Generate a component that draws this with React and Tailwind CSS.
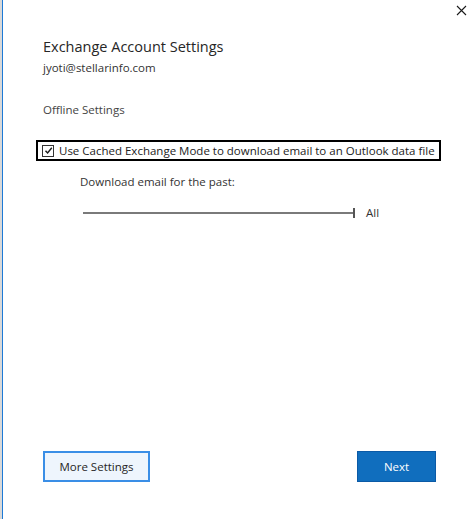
import React from "react";

const font = { fontFamily: '"Open Sans", "Noto Sans", sans-serif' };

const App = () => {
  return (
    <div className="flex h-[519px] w-[476px] overflow-hidden bg-white" style={font}>
      {/* sliver of the window behind */}
      <div className="w-[2px] bg-[#d9d9d9]" />
      <div className="w-px bg-[#1e7ad6]" />

      <div className="relative flex min-w-0 flex-1 flex-col pl-[40px] pr-[40px]">
        <button className="absolute right-[9px] top-[5px] text-[#222]">
          <svg width="11" height="11" viewBox="0 0 11 11">
            <path d="M1 1 L10 10 M10 1 L1 10" stroke="#1a1a1a" strokeWidth="1.1" fill="none" />
          </svg>
        </button>

        <h1 className="mt-[37px] text-[14.5px] leading-[20px] text-[#262626]">
          Exchange Account Settings
        </h1>
        <p className="mt-[3px] text-[11.5px] leading-[16px] text-[#333]">jyoti@stellarinfo.com</p>

        <p className="mt-[26px] text-[11.5px] leading-[16px] text-[#444]">Offline Settings</p>

        <label className="mt-[22px] -ml-[7px] flex h-[21px] w-max items-center gap-[5px] border-2 border-black pl-[4px] pr-[4px] text-[11.5px] text-[#222]">
          <span className="flex h-[12px] w-[12px] items-center justify-center border border-[#333] bg-white">
            <svg width="9" height="9" viewBox="0 0 9 9">
              <path d="M1.5 4.8 L3.6 7 L7.8 1.8" stroke="#1a1a1a" strokeWidth="1.4" fill="none" />
            </svg>
          </span>
          <span className="whitespace-nowrap">
            Use Cached Exchange Mode to download email to an Outlook data file
          </span>
        </label>

        <p className="ml-[37px] mt-[13px] text-[11.5px] leading-[16px] text-[#333]">
          Download email for the past:
        </p>

        <div className="ml-[40px] mt-[14px] flex items-center">
          <div className="h-[2px] w-[270px] bg-[#7a7a7a]" />
          <div className="h-[10px] w-[2px] bg-[#555]" />
          <span className="ml-[11px] text-[11.5px] text-[#333]">All</span>
        </div>

        <div className="mt-auto mb-[37px] flex items-center justify-between">
          <button className="h-[31px] w-[107px] border-2 border-[#3a8ee6] bg-[#eef5fd] text-[11.5px] text-[#262626]">
            More Settings
          </button>
          <button className="h-[31px] w-[79px] border border-[#0b5aa6] bg-[#106ebe] text-[11.5px] text-white">
            Next
          </button>
        </div>
      </div>
    </div>
  );
};

export default App;
